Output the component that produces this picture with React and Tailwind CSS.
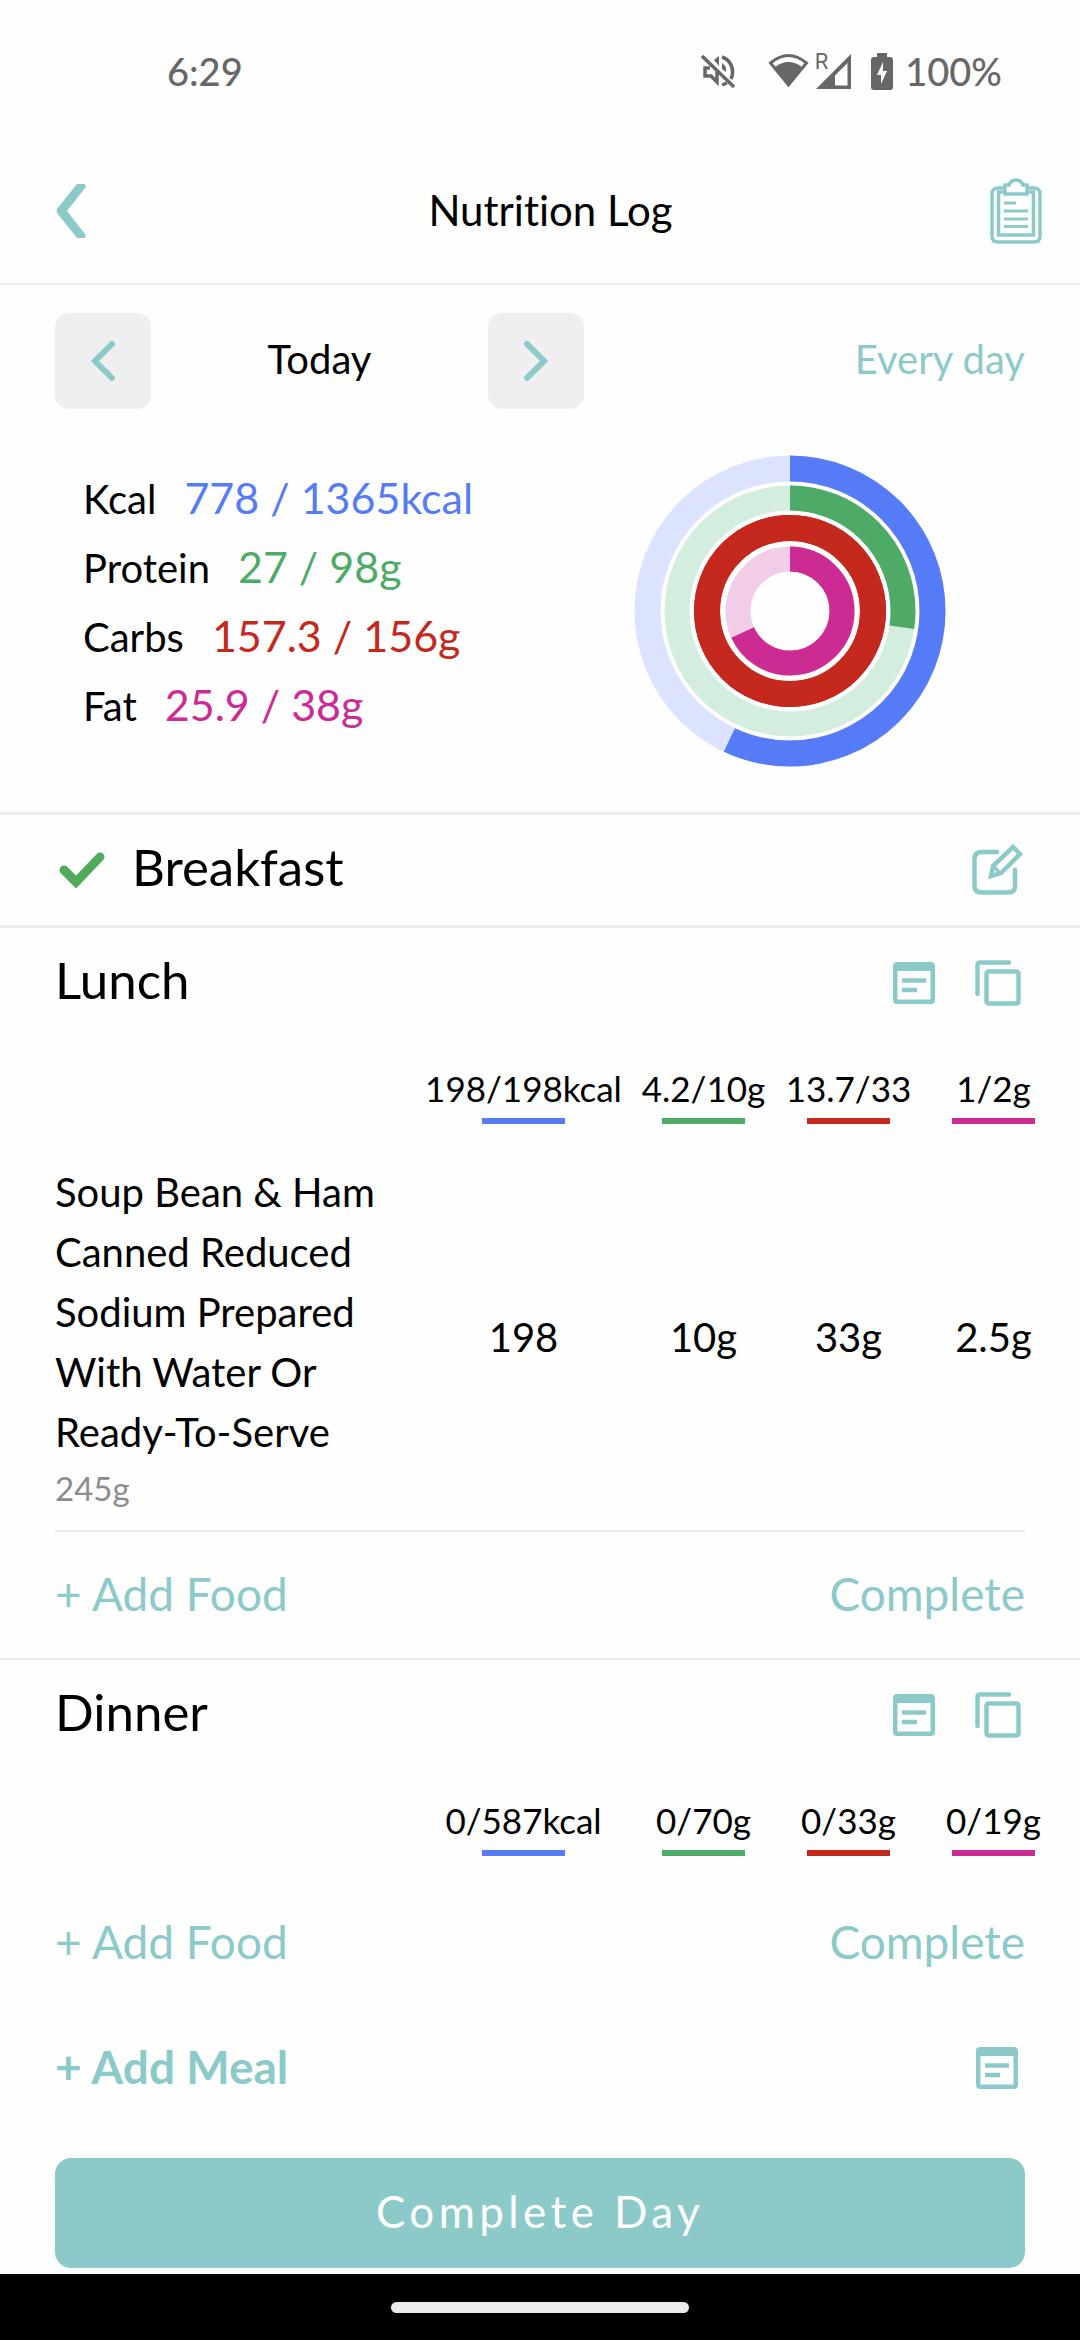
const BLUE = "#567bf6";
const GREEN = "#4eab67";
const RED = "#c5281c";
const PINK = "#cc2b94";

const rings = [
  { r: 142.5, width: 26, color: BLUE, track: "#dbe3fe", part: 0.57 },
  { r: 113, width: 25, color: GREEN, track: "#d3eddf", part: 0.273 },
  { r: 83, width: 26, color: RED, track: RED, part: 1 },
  { r: 52, width: 25, color: PINK, track: "#f1cde7", part: 0.682 },
];

const totals = [
  { label: "Kcal", value: "778 / 1365kcal", text: "text-[#567bf6]" },
  { label: "Protein", value: "27 / 98g", text: "text-[#4eab67]" },
  { label: "Carbs", value: "157.3 / 156g", text: "text-[#c5281c]" },
  { label: "Fat", value: "25.9 / 38g", text: "text-[#cc2b94]" },
];

const bars = ["bg-[#567bf6]", "bg-[#4eab67]", "bg-[#c5281c]", "bg-[#cc2b94]"];

const meals = [
  {
    name: "Lunch",
    heads: ["198/198kcal", "4.2/10g", "13.7/33", "1/2g"],
    foods: [
      {
        name: "Soup Bean & Ham Canned Reduced Sodium Prepared With Water Or Ready-To-Serve",
        amount: "245g",
        values: ["198", "10g", "33g", "2.5g"],
      },
    ],
  },
  {
    name: "Dinner",
    heads: ["0/587kcal", "0/70g", "0/33g", "0/19g"],
    foods: [],
  },
];

const StatusBar = () => (
  <div className="flex h-[138px] items-center justify-between pt-1 pl-[167px] pr-[78px] text-[38px] font-medium text-[#676767]">
    <span>6:29</span>
    <div className="flex items-center">
      <svg width="35" height="35" viewBox="0 0 35 35" fill="none" stroke="currentColor" strokeWidth="3.5">
        <path d="M1 2 L33 33" />
        <path d="M9 14 H4 V22 H10 L16 28 V18" />
        <path d="M13 6 L18 2 V12 Z" fill="currentColor" stroke="none" />
        <path d="M21 3 C30 6 34 16 30 25" />
        <path d="M21 9 Q26 12 25 18 L21 15 Z" fill="currentColor" stroke="none" />
        <path d="M21 31 L26 29" />
      </svg>
      <svg className="ml-8" width="41" height="36" viewBox="0 0 41 36" fill="none">
        <path d="M2.500 10 Q20.500 -5 38.500 10 L20.500 32 Z" stroke="#676767" strokeWidth="3" />
        <path d="M7 14 Q20.500 4 34 14 L20.500 34 Z" fill="#676767" />
      </svg>
      <div className="ml-[6px] flex items-start">
        <span className="font-[Roboto,sans-serif] text-[22px] leading-4 font-normal">R</span>
        <svg className="-ml-3" width="35" height="35" viewBox="0 0 35 35">
          <path d="M35 0 V35 H0 Z M31.500 9 L19 21.500 V31.500 H31.500 Z" fill="#676767" fillRule="evenodd" />
        </svg>
      </div>
      <svg className="ml-5 mr-3" width="22" height="37" viewBox="0 0 22 37">
        <path d="M6 0 H16 V4 H19 Q22 4 22 7 V34 Q22 37 19 37 H3 Q0 37 0 34 V7 Q0 4 3 4 H6 Z" fill="#676767" />
        <path d="M12 9 L6 22 H10 V31 L16 18 H12 Z" fill="white" />
      </svg>
      <span>100%</span>
    </div>
  </div>
);

const ClipboardIcon = () => (
  <svg width="52" height="66" viewBox="0 0 52 66" fill="none" stroke="currentColor" strokeWidth="3.5">
    <path d="M14 10 H8 Q2 10 2 16 V58 Q2 64 8 64 H44 Q50 64 50 58 V16 Q50 10 44 10 H38" />
    <path d="M14 14 H8.500 V57 H43.500 V14 H38" />
    <path d="M15 16 V7 H19 Q21 2 26 2 Q31 2 33 7 H37 V16 Z" />
    <path d="M14 25 H26 M14 33 H38 M14 41 H38 M14 48.500 H38" strokeWidth="3" />
  </svg>
);

const NoteIcon = () => (
  <svg width="42" height="42" viewBox="0 0 42 42">
    <path
      d="M4 0 H38 Q42 0 42 4 V38 Q42 42 38 42 H4 Q0 42 0 38 V4 Q0 0 4 0 Z M4.500 9 V37.500 H37.500 V9 Z"
      fill="currentColor"
      fillRule="evenodd"
    />
    <path d="M9 18.500 H33 M9 28 H24" stroke="currentColor" strokeWidth="4.500" />
  </svg>
);

const CopyIcon = () => (
  <svg width="46" height="46" viewBox="0 0 46 46" fill="none" stroke="currentColor" strokeWidth="4.5">
    <rect x="11.500" y="11.500" width="32" height="32" rx="2" />
    <path d="M2.500 34 V5 Q2.500 2.500 5 2.500 H34" strokeLinecap="round" />
  </svg>
);

const EditIcon = () => (
  <svg width="52" height="52" viewBox="0 0 52 52" fill="none" stroke="currentColor" strokeWidth="4.5" strokeLinecap="round">
    <path d="M25 8 H10 Q2.500 8 2.500 15 V42 Q2.500 48.500 10 48.500 H36 Q43 48.500 43 42 V26" />
    <path d="M41 3 L48 10 L29 29 L19 32 L21 22 Z" />
    <path d="M22 23 L28 29" strokeWidth="3.5" />
  </svg>
);

const DayButton = ({ label, d }) => (
  <button aria-label={label} className="flex size-24 items-center justify-center rounded-[14px] bg-[#efefef] text-[#8ccaca]">
    <svg width="26" height="42" viewBox="0 0 26 42" fill="none" stroke="currentColor" strokeWidth="6" strokeLinecap="round">
      <path d={d} />
    </svg>
  </button>
);

const Meal = ({ meal }) => (
  <section>
    <div className="flex h-[110px] items-center justify-between pl-[55px] pr-[59px]">
      <h2 className="pb-[6px] text-[51px] leading-[60px]">{meal.name}</h2>
      <div className="flex items-center gap-10 text-[#8ccaca]">
        <button aria-label="Meal note"><NoteIcon /></button>
        <button aria-label="Copy meal"><CopyIcon /></button>
      </div>
    </div>
    <table className="w-full table-fixed">
      <thead>
        <tr>
          <td />
          {meal.heads.map((head, i) => (
            <th key={i} className={i == 0 ? "w-[215px] font-normal" : "w-[145px] font-normal"}>
              <div className="pt-7 text-[35px] leading-[44px] whitespace-nowrap">{head}</div>
              <div className={`mx-auto mt-2 h-[6px] w-[83px] ${bars[i]}`} />
            </th>
          ))}
          <td className="w-[14px]" />
        </tr>
      </thead>
      <tbody>
        {meal.foods.map((food) => (
          <tr key={food.name}>
            <td className="pt-[38px] pb-4 pl-[55px] text-[40px] leading-[60px]">
              {food.name}
              <div className="text-[33px] leading-[52px] text-[#8c8c8c]">{food.amount}</div>
            </td>
            {food.values.map((value) => (
              <td key={value} className="pt-5 text-center text-[40px]">{value}</td>
            ))}
          </tr>
        ))}
      </tbody>
    </table>
    {meal.foods.length > 0 ? <hr className="mx-[55px] border-t-2 border-[#ececec]" /> : <div className="h-6" />}
    <div className="flex h-[126px] items-center justify-between px-[55px] pb-1 text-[46px] text-[#8ccaca]">
      <button>+ Add Food</button>
      <button>Complete</button>
    </div>
  </section>
);

const App = () => {
  return (
    <div className="flex min-h-screen flex-col bg-[#fefefe] font-[Lato,sans-serif] text-black [font-variant-ligatures:none]">
      <StatusBar />
      <header className="flex h-[147px] items-center justify-between border-b-2 border-[#ececec] pr-[38px] pl-[56px] text-[#8ccaca]">
        <button aria-label="Back">
          <svg width="31" height="54" viewBox="0 0 31 54">
            <path d="M21 0 H28 Q31 1 29 4 L11 27 L29 50 Q31 53 28 54 H21 L1 29 Q0 27 1 25 Z" fill="currentColor" />
          </svg>
        </button>
        <h1 className="pl-6 text-[42px] text-black">Nutrition Log</h1>
        <button aria-label="Food list"><ClipboardIcon /></button>
      </header>

      <div className="flex items-center justify-between px-[55px] pt-7">
        <div className="flex w-[529px] items-center justify-between text-[40px]">
          <DayButton label="Previous day" d="M22 4 L5 21 L22 38" />
          <span className="pb-1">Today</span>
          <DayButton label="Next day" d="M4 4 L21 21 L4 38" />
        </div>
        <button className="pb-1 text-[40px] text-[#8ccaca]">Every day</button>
      </div>

      <div className="flex items-center justify-between border-b-3 border-[#ececec] pt-[46px] pr-[134px] pb-[45px] pl-[83px]">
        <div className="pb-5">
          {totals.map((total) => (
            <div key={total.label} className="flex h-[69px] items-baseline gap-7 leading-[69px]">
              <span className="text-[40px]">{total.label}</span>
              <span className={`text-[43px] ${total.text}`}>{total.value}</span>
            </div>
          ))}
        </div>
        <svg width="312" height="312" viewBox="-156 -156 312 312" fill="none">
          {rings.map((ring) => (
            <g key={ring.r} strokeWidth={ring.width} transform="rotate(-90)">
              <circle r={ring.r} stroke={ring.track} />
              <circle r={ring.r} stroke={ring.color} pathLength="1" strokeDasharray={`${ring.part} 1`} />
            </g>
          ))}
        </svg>
      </div>

      <div className="flex h-[113px] items-center border-b-3 border-[#ececec] pr-[56px] pl-[59px]">
        <svg width="47" height="38" viewBox="0 0 47 38" fill="none" stroke="#4fab5b" strokeWidth="9">
          <path d="M5 19 L17 31 L41 6" strokeLinecap="round" />
        </svg>
        <h2 className="ml-[26px] pb-[6px] text-[51px] leading-[60px]">Breakfast</h2>
        <button aria-label="Edit breakfast" className="ml-auto text-[#8ccaca]"><EditIcon /></button>
      </div>

      <Meal meal={meals[0]} />
      <hr className="border-t-2 border-[#ececec]" />
      <Meal meal={meals[1]} />

      <div className="flex h-[124px] items-center justify-between pr-[62px] pl-[55px] text-[46px] font-bold text-[#8ccaca]">
        <button className="pb-1">+ Add Meal</button>
        <button aria-label="Day note"><NoteIcon /></button>
      </div>
      <button className="mx-[55px] mt-7 h-[110px] rounded-2xl bg-[#8ccaca] pb-1 text-[44px] tracking-widest text-white">
        Complete Day
      </button>
      <div className="mt-auto flex h-[66px] items-center justify-center bg-black">
        <div className="h-[11px] w-[298px] rounded-full bg-[#ebebeb]" />
      </div>
    </div>
  );
};

export default App;
